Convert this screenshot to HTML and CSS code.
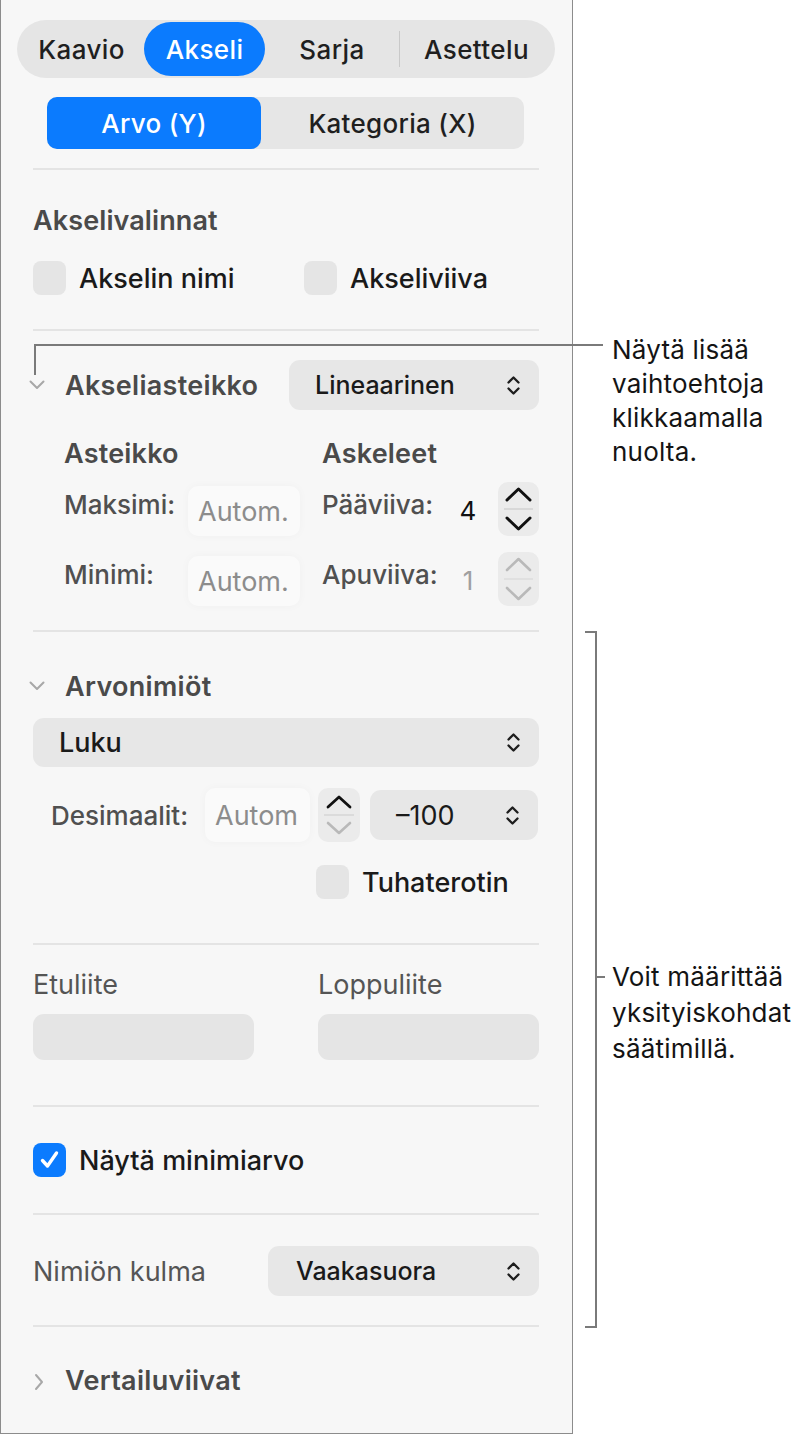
FILE: index.html
```html
<!DOCTYPE html>
<html lang="fi">
  <head>
    <meta charset="UTF-8" />
    <meta name="viewport" content="width=device-width, initial-scale=1.0" />
    <title>Akseli</title>
    <link rel="stylesheet" href="styles.css">
  </head>
  <body>
    <div class="page">
      <div class="panel">
        <!-- ylävälilehdet -->
        <div class="tabs">
          <div class="tab t-kaavio">Kaavio</div>
          <div class="tab t-akseli active">Akseli</div>
          <div class="tab t-sarja">Sarja</div>
          <div class="tab-sep"></div>
          <div class="tab t-asettelu">Asettelu</div>
        </div>

        <div class="subtabs">
          <div class="subtab t-arvo active">Arvo (Y)</div>
          <div class="subtab t-kat">Kategoria (X)</div>
        </div>

        <div class="divider d-top"></div>

        <!-- Akselivalinnat -->
        <div class="sec-title t-opts">Akselivalinnat</div>
        <div class="check-row r-opts">
          <label class="check c-name"><span class="box"></span>Akselin nimi</label>
          <label class="check"><span class="box"></span>Akseliviiva</label>
        </div>

        <div class="divider d-opts"></div>

        <!-- Akseliasteikko -->
        <div class="disc-row r-scale">
          <span class="chev">
            <svg width="16" height="10" viewBox="0 0 16 10"><path d="M1.5 1.5 8 8 14.5 1.5" fill="none" stroke="#a8a8a8" stroke-width="2" stroke-linecap="round" stroke-linejoin="round"/></svg>
          </span>
          <span class="disc-title">Akseliasteikko</span>
          <div class="select sel-scale">
            <span>Lineaarinen</span>
            <svg class="updown" width="15" height="21" viewBox="0 0 15 21"><path d="M2.5 7.5 7.5 2.5 12.5 7.5M2.5 13.5 7.5 18.5 12.5 13.5" fill="none" stroke="#1d1d1d" stroke-width="2.3" stroke-linecap="round" stroke-linejoin="round"/></svg>
          </div>
        </div>

        <div class="scale-head">
          <span class="sh-left">Asteikko</span>
          <span>Askeleet</span>
        </div>

        <div class="scale-row r-max">
          <span class="s-label">Maksimi:</span>
          <span class="field f-auto">Autom.</span>
          <span class="s-label s-label2">Pääviiva:</span>
          <span class="num">4</span>
          <svg class="stepper" width="41" height="54" viewBox="0 0 41 54"><path d="M6 27H35" stroke="#d2d2d2" stroke-width="1.5"/><path d="M9 18 20.5 7 32 18" fill="none" stroke="#111" stroke-width="3" stroke-linecap="round" stroke-linejoin="round"/><path d="M9 36 20.5 47 32 36" fill="none" stroke="#111" stroke-width="3" stroke-linecap="round" stroke-linejoin="round"/></svg>
        </div>

        <div class="scale-row r-min">
          <span class="s-label">Minimi:</span>
          <span class="field f-auto">Autom.</span>
          <span class="s-label s-label2">Apuviiva:</span>
          <span class="num dim">1</span>
          <svg class="stepper" width="41" height="54" viewBox="0 0 41 54"><path d="M6 27H35" stroke="#dcdcdc" stroke-width="1.5"/><path d="M9 18 20.5 7 32 18" fill="none" stroke="#b9b9b9" stroke-width="2.6" stroke-linecap="round" stroke-linejoin="round"/><path d="M9 36 20.5 47 32 36" fill="none" stroke="#b9b9b9" stroke-width="2.6" stroke-linecap="round" stroke-linejoin="round"/></svg>
        </div>

        <div class="divider d-scale"></div>

        <!-- Arvonimiöt -->
        <div class="disc-row r-labels">
          <span class="chev">
            <svg width="16" height="10" viewBox="0 0 16 10"><path d="M1.5 1.5 8 8 14.5 1.5" fill="none" stroke="#a8a8a8" stroke-width="2" stroke-linecap="round" stroke-linejoin="round"/></svg>
          </span>
          <span class="disc-title">Arvonimiöt</span>
        </div>

        <div class="select sel-luku">
          <span>Luku</span>
          <svg class="updown" width="15" height="21" viewBox="0 0 15 21"><path d="M2.5 7.5 7.5 2.5 12.5 7.5M2.5 13.5 7.5 18.5 12.5 13.5" fill="none" stroke="#1d1d1d" stroke-width="2.3" stroke-linecap="round" stroke-linejoin="round"/></svg>
        </div>

        <div class="dec-row">
          <span class="s-label dec-label">Desimaalit:</span>
          <span class="field f-dec">Autom</span>
          <svg class="stepper st-dec" width="42" height="54" viewBox="0 0 42 54"><path d="M6 27H36" stroke="#d6d6d6" stroke-width="1.5"/><path d="M10 19 21 9 32 19" fill="none" stroke="#111" stroke-width="2.8" stroke-linecap="round" stroke-linejoin="round"/><path d="M10 35 21 45 32 35" fill="none" stroke="#b9b9b9" stroke-width="2.6" stroke-linecap="round" stroke-linejoin="round"/></svg>
          <div class="select sel-dec">
            <span>–100</span>
            <svg class="updown" width="15" height="21" viewBox="0 0 15 21"><path d="M2.5 7.5 7.5 2.5 12.5 7.5M2.5 13.5 7.5 18.5 12.5 13.5" fill="none" stroke="#1d1d1d" stroke-width="2.3" stroke-linecap="round" stroke-linejoin="round"/></svg>
          </div>
        </div>

        <div class="check-row r-thousand">
          <label class="check"><span class="box"></span>Tuhaterotin</label>
        </div>

        <div class="divider d-labels"></div>

        <!-- Etuliite / Loppuliite -->
        <div class="affix-row">
          <div class="affix">
            <div class="affix-label">Etuliite</div>
            <div class="affix-field"></div>
          </div>
          <div class="affix">
            <div class="affix-label">Loppuliite</div>
            <div class="affix-field"></div>
          </div>
        </div>

        <div class="divider d-affix"></div>

        <div class="check-row r-minval">
          <label class="check">
            <span class="box checked">
              <svg width="33" height="33" viewBox="0 0 33 33"><path d="M9.5 17.5 14.5 23 23.5 10" fill="none" stroke="#fff" stroke-width="3.4" stroke-linecap="round" stroke-linejoin="round"/></svg>
            </span>Näytä minimiarvo
          </label>
        </div>

        <div class="divider d-minval"></div>

        <div class="angle-row">
          <span class="angle-label">Nimiön kulma</span>
          <div class="select sel-angle">
            <span>Vaakasuora</span>
            <svg class="updown" width="15" height="21" viewBox="0 0 15 21"><path d="M2.5 7.5 7.5 2.5 12.5 7.5M2.5 13.5 7.5 18.5 12.5 13.5" fill="none" stroke="#1d1d1d" stroke-width="2.3" stroke-linecap="round" stroke-linejoin="round"/></svg>
          </div>
        </div>

        <div class="divider d-angle"></div>

        <div class="disc-row r-ref">
          <span class="chev">
            <svg width="10" height="18" viewBox="0 0 10 18"><path d="M2 2 8 9 2 16" fill="none" stroke="#a8a8a8" stroke-width="2" stroke-linecap="round" stroke-linejoin="round"/></svg>
          </span>
          <span class="disc-title">Vertailuviivat</span>
        </div>
      </div>

      <!-- selitteet -->
      <div class="callout-line cl-h"></div>
      <div class="callout-line cl-v"></div>
      <div class="callout c-more">Näytä lisää<br>vaihtoehtoja<br>klikkaamalla<br>nuolta.</div>

      <div class="bracket"></div>
      <div class="callout-line cl-tick"></div>
      <div class="callout c-detail">Voit määrittää<br>yksityiskohdat<br>säätimillä.</div>
    </div>
  </body>
</html>
```

FILE: styles.css
```css
body {
  margin: 0;
  padding: 0;
  background: #fff;
  font-family: Inter, "Noto Sans", sans-serif;
  color: #1d1d1d;
}
.page {
  position: relative;
  width: 811px;
  height: 1436px;
}
.panel {
  box-sizing: border-box;
  width: 573px;
  height: 1434px;
  padding: 20px 33px 0 32px;
  background: #f7f7f7;
  border: 1px solid #8c8c8c;
  border-top: none;
}

/* välilehdet */
.tabs {
  display: flex;
  align-items: stretch;
  width: 538px;
  height: 58px;
  margin-left: -16px;
  padding: 2px;
  box-sizing: border-box;
  background: #e5e5e5;
  border-radius: 29px;
}
.tab {
  display: flex;
  align-items: center;
  justify-content: center;
  font-size: 26px;
  font-weight: 500;
  letter-spacing: 0.4px;
  color: #1f1f1f;
  border-radius: 28px;
}
.t-kaavio { width: 125px; }
.t-akseli { width: 121px; }
.t-sarja { width: 134px; }
.t-asettelu { width: 153px; }
.tab.active {
  background: #0b7bfe;
  color: #fff;
}
.tab-sep {
  width: 1px;
  height: 36px;
  align-self: center;
  background: #c9c9c9;
}
.subtabs {
  display: flex;
  width: 477px;
  height: 52px;
  margin: 19px 0 0 14px;
  background: #e6e6e6;
  border-radius: 10px;
}
.subtab {
  display: flex;
  align-items: center;
  justify-content: center;
  font-size: 26px;
  font-weight: 500;
  letter-spacing: 0.3px;
  color: #1f1f1f;
  border-radius: 10px;
}
.t-arvo { width: 214px; }
.t-kat { width: 263px; }
.subtab.active {
  background: #0b7bfe;
  color: #fff;
}

.divider {
  height: 2px;
  background: #e4e4e4;
}
.d-top { margin-top: 19px; }
.d-opts { margin-top: 34px; }
.d-scale { margin-top: 24px; }
.d-labels { margin-top: 44px; }
.d-affix { margin-top: 45px; }
.d-minval { margin-top: 36px; }
.d-angle { margin-top: 29px; }

.sec-title {
  height: 30px;
  line-height: 30px;
  font-size: 27px;
  font-weight: 600;
  letter-spacing: 0.1px;
  color: #4a4a4a;
}
.t-opts { margin-top: 36px; }

.check-row {
  display: flex;
  height: 34px;
}
.r-opts { margin-top: 25px; }
.r-thousand { margin-top: 23px; padding-left: 283px; }
.r-minval { margin-top: 36px; }
.check {
  display: flex;
  align-items: center;
  gap: 13px;
  font-size: 27px;
  font-weight: 500;
  color: #1a1a1a;
}
.c-name { width: 271px; }
.box {
  display: block;
  flex-shrink: 0;
  width: 33px;
  height: 34px;
  border-radius: 8px;
  background: #e5e5e5;
}
.box.checked {
  background: #0b7bfe;
}
.box svg { display: block; }

/* avattavat osiot */
.disc-row {
  display: flex;
  align-items: center;
  height: 50px;
}
.r-scale { margin-top: 29px; }
.r-labels { height: 30px; margin-top: 39px; }
.r-ref { height: 30px; margin-top: 38px; }
.chev {
  display: flex;
  width: 36px;
  margin-left: -4px;
}
.r-ref .chev { margin-left: 1px; width: 31px; padding-top: 4px; }
.disc-title {
  font-size: 27px;
  font-weight: 600;
  letter-spacing: 0.3px;
  color: #4a4a4a;
}
.select {
  display: flex;
  align-items: center;
  justify-content: space-between;
  box-sizing: border-box;
  height: 50px;
  padding: 0 18px 0 26px;
  background: #e7e7e7;
  border-radius: 11px;
  font-size: 25px;
  font-weight: 500;
  color: #1a1a1a;
}
.sel-scale {
  width: 250px;
  margin-left: auto;
}
.updown { display: block; flex-shrink: 0; }

.scale-head {
  display: flex;
  height: 30px;
  line-height: 30px;
  margin-top: 29px;
  padding-left: 31px;
  font-size: 27px;
  font-weight: 600;
  letter-spacing: 0.2px;
  color: #4a4a4a;
}
.sh-left { width: 258px; }

.scale-row {
  display: flex;
  align-items: center;
  height: 54px;
  padding-left: 31px;
}
.r-max { margin-top: 13px; }
.r-min { margin-top: 16px; }
.s-label {
  font-size: 26px;
  font-weight: 500;
  color: #505050;
  padding-bottom: 10px;
  white-space: nowrap;
}
.scale-row .s-label { width: 124px; }
.scale-row .s-label2 { width: 120px; margin-left: 22px; }
.field {
  display: flex;
  align-items: center;
  box-sizing: border-box;
  height: 50px;
  padding-left: 10px;
  background: #fafafa;
  border-radius: 10px;
  box-shadow: 0 0 10px rgba(0, 0, 0, 0.03);
  font-size: 27px;
  color: #8c8c8c;
}
.f-auto { width: 112px; margin-top: 4px; }
.num {
  width: 52px;
  text-align: center;
  font-size: 26px;
  color: #111;
  padding-top: 2px;
}
.num.dim { color: #a0a0a0; }
.stepper {
  display: block;
  margin-left: 4px;
  background: #ebebeb;
  border-radius: 10px;
}

.sel-luku {
  margin-top: 17px;
  height: 49px;
  padding-left: 26px;
  font-size: 27px;
}
.dec-row {
  display: flex;
  align-items: center;
  height: 54px;
  margin-top: 21px;
  padding-left: 18px;
}
.dec-label {
  width: 154px;
  padding-bottom: 0;
}
.f-dec { width: 105px; height: 54px; }
.st-dec { margin-left: 8px; }
.sel-dec {
  width: 168px;
  margin-left: 10px;
  padding-left: 26px;
  font-size: 27px;
  font-weight: 400;
}

/* etuliite ja loppuliite */
.affix-row {
  display: flex;
  gap: 64px;
  margin-top: 25px;
}
.affix { width: 221px; }
.affix-label {
  height: 30px;
  line-height: 30px;
  font-size: 27px;
  color: #555;
}
.affix-field {
  height: 46px;
  margin-top: 14px;
  background: #e5e5e5;
  border-radius: 11px;
}

.angle-row {
  display: flex;
  align-items: center;
  justify-content: space-between;
  margin-top: 31px;
}
.angle-label {
  font-size: 27px;
  color: #555;
}
.sel-angle {
  width: 271px;
  padding-left: 28px;
}

/* selitteet */
.callout-line {
  position: absolute;
  background: #7a7a7a;
}
.cl-h { left: 34px; top: 344px; width: 569px; height: 2px; }
.cl-v { left: 34px; top: 344px; width: 2px; height: 31px; }
.cl-tick { left: 596px; top: 976px; width: 9px; height: 2px; }
.bracket {
  position: absolute;
  left: 585px;
  top: 631px;
  width: 10px;
  height: 693px;
  border: 2px solid #7a7a7a;
  border-left: none;
}
.callout {
  position: absolute;
  left: 612px;
  font-size: 26px;
  letter-spacing: 0.2px;
  color: #141414;
}
.c-more { top: 333px; line-height: 34px; }
.c-detail { top: 959px; line-height: 36px; }
```
